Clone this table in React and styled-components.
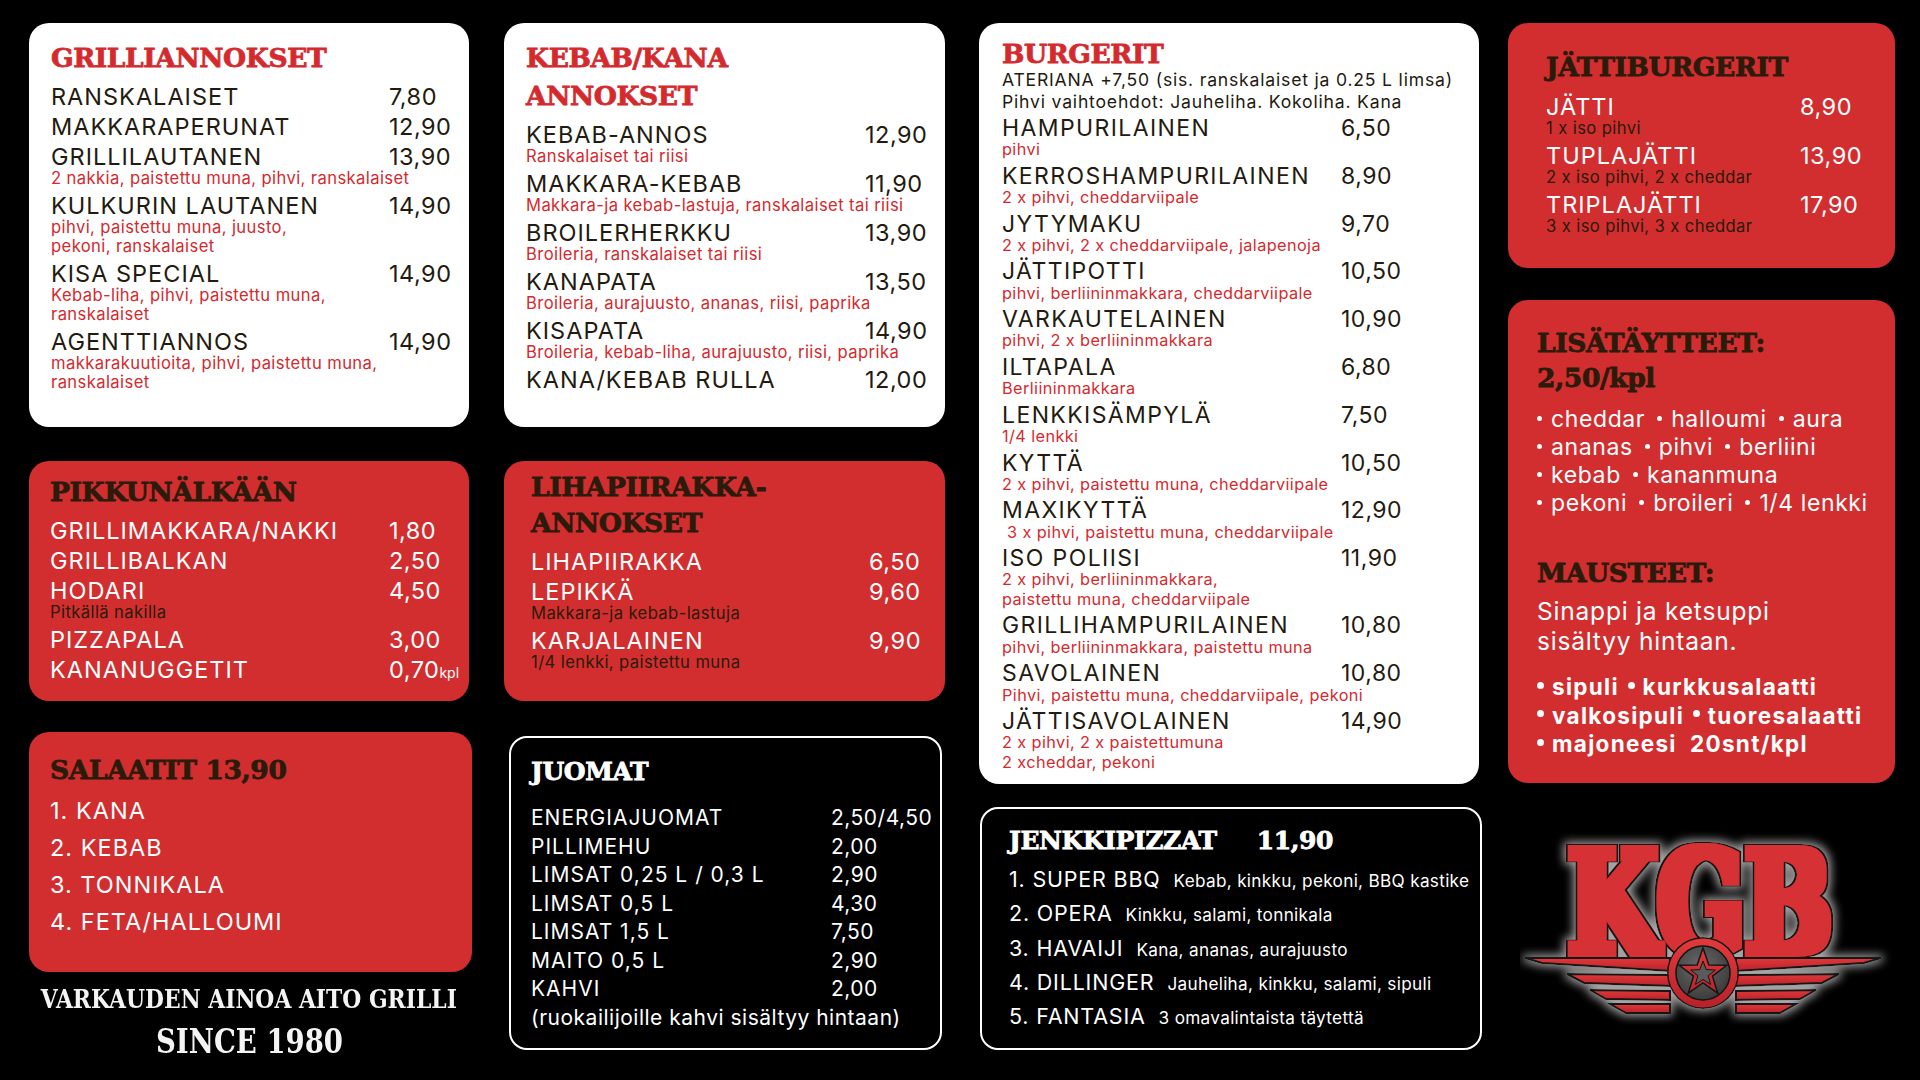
import React from 'react'
import styled, { createGlobalStyle } from 'styled-components'

const GlobalStyle = createGlobalStyle`
  html, body {
    margin: 0;
    padding: 0;
    background: #000;
  }
  body {
    width: 1920px;
    height: 1080px;
    overflow: hidden;
    font-family: Inter, "Noto Sans", sans-serif;
  }
`

const RED = '#d22e2f'
const DARK = '#2a1b0b'

const tones = {
  white: { bg: '#fff', title: '#d42a2e', item: '#231a10', desc: '#d42a2e', border: '0' },
  red: { bg: RED, title: DARK, item: '#fff', desc: DARK, border: '0' },
  black: { bg: '#000', title: '#fff', item: '#fff', desc: '#fff', border: '2px solid #fff' },
}

const Board = styled.main`
  display: flex;
  align-items: flex-start;
  width: 1920px;
  height: 1080px;
  box-sizing: border-box;
  padding: 23px 0 0 29px;
`

const Column = styled.div`
  display: flex;
  flex-direction: column;
  flex: none;
  width: ${p => p.$w}px;
  margin-left: ${p => p.$ml || 0}px;
`

const Card = styled.section`
  --title-color: ${p => tones[p.$tone].title};
  --desc-color: ${p => tones[p.$tone].desc};
  box-sizing: border-box;
  height: ${p => p.$h}px;
  margin: ${p => p.$mt || 0}px ${p => p.$mr || 0}px 0 ${p => p.$ml || 0}px;
  padding: ${p => p.$pad};
  border-radius: ${p => (p.$tone === 'black' ? 18 : 20)}px;
  border: ${p => tones[p.$tone].border};
  background: ${p => tones[p.$tone].bg};
  color: ${p => tones[p.$tone].item};
`

const Title = styled.h2`
  margin: ${p => p.$mt || 0}px 0 ${p => p.$mb || 0}px;
  font-family: "DejaVu Serif", "Liberation Serif", serif;
  font-weight: 700;
  font-size: ${p => p.$size || 26.5}px;
  line-height: ${p => p.$lh || 38}px;
  letter-spacing: -0.4px;
  color: var(--title-color);
  -webkit-text-stroke: 0.8px var(--title-color);
  white-space: nowrap;
`

const TitlePrice = styled.span`
  margin-left: 40px;
`

const Row = styled.div`
  display: grid;
  grid-template-columns: ${p => p.$priceAt}px auto;
  font-size: ${p => p.$size}px;
  line-height: ${p => p.$lh}px;
  letter-spacing: ${p => p.$track}px;
  white-space: nowrap;
`

const Price = styled.span`
  letter-spacing: 0.5px;
`

const Unit = styled.span`
  font-size: 14px;
  letter-spacing: 0;
`

const Desc = styled.div`
  margin: ${p => p.$mt}px 0 ${p => p.$mb}px;
  color: var(--desc-color);
  font-size: ${p => p.$size}px;
  line-height: ${p => p.$lh}px;
  letter-spacing: 0.4px;
  white-space: pre;
`

const Sub = styled.div`
  margin-bottom: 2px;
  font-size: 17.6px;
  line-height: 20px;
  letter-spacing: 0.8px;
  white-space: nowrap;
`

const Line = styled.div`
  margin-top: ${p => p.$mt || 0}px;
  font-size: ${p => p.$size}px;
  font-weight: ${p => p.$weight || 400};
  line-height: ${p => p.$lh}px;
  letter-spacing: ${p => p.$track ?? 0.5}px;
  white-space: nowrap;
`

const Dot = styled.span`
  display: inline-block;
  width: ${p => p.$d}px;
  height: ${p => p.$d}px;
  margin: 0 ${p => p.$gap}px 0 ${p => p.$lead}px;
  border-radius: 50%;
  background: currentColor;
  vertical-align: 0.28em;
`

const PizzaRow = styled.div`
  font-size: 21.5px;
  line-height: 34.3px;
  letter-spacing: 0.8px;
  white-space: nowrap;
`

const PizzaDesc = styled.span`
  margin-left: 13px;
  font-size: 17.2px;
  line-height: 1;
  letter-spacing: 0.3px;
`

const Slogan = styled.div`
  align-self: center;
  width: max-content;
  margin-top: ${p => p.$mt}px;
  font-family: "DejaVu Serif", serif;
  font-weight: 700;
  font-size: ${p => p.$size}px;
  line-height: ${p => p.$lh}px;
  color: #f4f4f4;
  white-space: nowrap;
  transform: scaleX(${p => p.$sx});
`

const LogoWrap = styled.div`
  margin: 17px 0 0 12px;
  width: 400px;
  height: 230px;
`

const grilli = [
  { name: 'RANSKALAISET', price: '7,80' },
  { name: 'MAKKARAPERUNAT', price: '12,90' },
  { name: 'GRILLILAUTANEN', price: '13,90', desc: ['2 nakkia, paistettu muna, pihvi, ranskalaiset'] },
  { name: 'KULKURIN LAUTANEN', price: '14,90', desc: ['pihvi, paistettu muna, juusto,', 'pekoni, ranskalaiset'] },
  { name: 'KISA SPECIAL', price: '14,90', desc: ['Kebab-liha, pihvi, paistettu muna,', 'ranskalaiset'] },
  { name: 'AGENTTIANNOS', price: '14,90', desc: ['makkarakuutioita, pihvi, paistettu muna,', 'ranskalaiset'] },
]

const kebab = [
  { name: 'KEBAB-ANNOS', price: '12,90', desc: ['Ranskalaiset tai riisi'] },
  { name: 'MAKKARA-KEBAB', price: '11,90', desc: ['Makkara-ja kebab-lastuja, ranskalaiset tai riisi'] },
  { name: 'BROILERHERKKU', price: '13,90', desc: ['Broileria, ranskalaiset tai riisi'] },
  { name: 'KANAPATA', price: '13,50', desc: ['Broileria, aurajuusto, ananas, riisi, paprika'] },
  { name: 'KISAPATA', price: '14,90', desc: ['Broileria, kebab-liha, aurajuusto, riisi, paprika'] },
  { name: 'KANA/KEBAB RULLA', price: '12,00' },
]

const burgers = [
  { name: 'HAMPURILAINEN', price: '6,50', desc: ['pihvi'] },
  { name: 'KERROSHAMPURILAINEN', price: '8,90', desc: ['2 x pihvi, cheddarviipale'] },
  { name: 'JYTYMAKU', price: '9,70', desc: ['2 x pihvi, 2 x cheddarviipale, jalapenoja'] },
  { name: 'JÄTTIPOTTI', price: '10,50', desc: ['pihvi, berliininmakkara, cheddarviipale'] },
  { name: 'VARKAUTELAINEN', price: '10,90', desc: ['pihvi, 2 x berliininmakkara'] },
  { name: 'ILTAPALA', price: '6,80', desc: ['Berliininmakkara'] },
  { name: 'LENKKISÄMPYLÄ', price: '7,50', desc: ['1/4 lenkki'] },
  { name: 'KYTTÄ', price: '10,50', desc: ['2 x pihvi, paistettu muna, cheddarviipale'] },
  { name: 'MAXIKYTTÄ', price: '12,90', desc: [' 3 x pihvi, paistettu muna, cheddarviipale'] },
  { name: 'ISO POLIISI', price: '11,90', desc: ['2 x pihvi, berliininmakkara,', 'paistettu muna, cheddarviipale'] },
  { name: 'GRILLIHAMPURILAINEN', price: '10,80', desc: ['pihvi, berliininmakkara, paistettu muna'] },
  { name: 'SAVOLAINEN', price: '10,80', desc: ['Pihvi, paistettu muna, cheddarviipale, pekoni'] },
  { name: 'JÄTTISAVOLAINEN', price: '14,90', desc: ['2 x pihvi, 2 x paistettumuna', '2 xcheddar, pekoni'] },
]

const jatti = [
  { name: 'JÄTTI', price: '8,90', desc: ['1 x iso pihvi'] },
  { name: 'TUPLAJÄTTI', price: '13,90', desc: ['2 x iso pihvi, 2 x cheddar'] },
  { name: 'TRIPLAJÄTTI', price: '17,90', desc: ['3 x iso pihvi, 3 x cheddar'] },
]

const pikku = [
  { name: 'GRILLIMAKKARA/NAKKI', price: '1,80' },
  { name: 'GRILLIBALKAN', price: '2,50' },
  { name: 'HODARI', price: '4,50', desc: ['Pitkällä nakilla'] },
  { name: 'PIZZAPALA', price: '3,00' },
  { name: 'KANANUGGETIT', price: '0,70', unit: 'kpl' },
]

const piirakka = [
  { name: 'LIHAPIIRAKKA', price: '6,50' },
  { name: 'LEPIKKÄ', price: '9,60', desc: ['Makkara-ja kebab-lastuja'] },
  { name: 'KARJALAINEN', price: '9,90', desc: ['1/4 lenkki, paistettu muna'] },
]

const juomat = [
  { name: 'ENERGIAJUOMAT', price: '2,50/4,50' },
  { name: 'PILLIMEHU', price: '2,00' },
  { name: 'LIMSAT 0,25 L / 0,3 L', price: '2,90' },
  { name: 'LIMSAT 0,5 L', price: '4,30' },
  { name: 'LIMSAT 1,5 L', price: '7,50' },
  { name: 'MAITO 0,5 L', price: '2,90' },
  { name: 'KAHVI', price: '2,00' },
]

const salaatit = ['1. KANA', '2. KEBAB', '3. TONNIKALA', '4. FETA/HALLOUMI']

const pizzat = [
  ['1. SUPER BBQ', 'Kebab, kinkku, pekoni, BBQ kastike'],
  ['2. OPERA', 'Kinkku, salami, tonnikala'],
  ['3. HAVAIJI', 'Kana, ananas, aurajuusto'],
  ['4. DILLINGER', 'Jauheliha, kinkku, salami, sipuli'],
  ['5. FANTASIA', '3 omavalintaista täytettä'],
]

function MenuList({ items, priceAt, size = 23.5, lh = 30, track = 1, dSize = 16.6, dLh = 19, dMt = -3, dMb = 3 }) {
  return items.map(item => (
    <React.Fragment key={item.name}>
      <Row $priceAt={priceAt} $size={size} $lh={lh} $track={track}>
        <span>{item.name}</span>
        <Price>
          {item.price}
          {item.unit && <Unit>{item.unit}</Unit>}
        </Price>
      </Row>
      {item.desc && (
        <Desc $size={dSize} $lh={dLh} $mt={dMt} $mb={dMb}>
          {item.desc.map(l => <div key={l}>{l}</div>)}
        </Desc>
      )}
    </React.Fragment>
  ))
}

function Bullets({ words, d = 5, gap = 9, lead = 5 }) {
  return words.map((w, i) => (
    <React.Fragment key={w}>
      {i > 0 && ' '}
      <Dot $d={d} $gap={gap} $lead={i > 0 ? lead : 0} />
      {w}
    </React.Fragment>
  ))
}

const starPoints = (cx, cy, R, r) =>
  Array.from({ length: 10 }, (_, i) => {
    const a = ((-90 + i * 36) * Math.PI) / 180
    const rad = i % 2 ? r : R
    return `${(cx + rad * Math.cos(a)).toFixed(1)},${(cy + rad * Math.sin(a)).toFixed(1)}`
  }).join(' ')

const wing = [
  '5,128 150,128 150,141 22,133',
  '47,144 150,145 150,156 64,153',
  '70,160 150,161 150,170 86,169',
  '90,174 150,174 150,183 106,183',
]

function Logo() {
  return (
    <svg viewBox="0 -30 400 230" width="400" height="230">
      <defs>
        <filter id="heavy" x="-8%" y="-15%" width="116%" height="130%">
          <feMorphology in="SourceGraphic" operator="dilate" radius="4.5 3.6" result="fat" />
          <feMorphology in="SourceAlpha" operator="dilate" radius="6.5 5.2" result="ring" />
          <feFlood floodColor="#151515" />
          <feComposite in2="ring" operator="in" result="outline" />
          <feMerge>
            <feMergeNode in="outline" />
            <feMergeNode in="fat" />
          </feMerge>
        </filter>
        <filter id="glow" x="-10%" y="-20%" width="120%" height="140%">
          <feMorphology in="SourceAlpha" operator="dilate" radius="2" result="grow" />
          <feGaussianBlur in="grow" stdDeviation="5" result="blur" />
          <feFlood floodColor="#cfcfcf" floodOpacity="0.8" />
          <feComposite in2="blur" operator="in" result="halo" />
          <feMerge>
            <feMergeNode in="halo" />
            <feMergeNode in="SourceGraphic" />
          </feMerge>
        </filter>
        <linearGradient id="redFill" x1="0" y1="0" x2="0" y2="1">
          <stop offset="0" stopColor="#e0393a" />
          <stop offset="1" stopColor="#bb232a" />
        </linearGradient>
        <radialGradient id="hub" cx="0.45" cy="0.4" r="0.7">
          <stop offset="0" stopColor="#6a6a6a" />
          <stop offset="1" stopColor="#2e2e2e" />
        </radialGradient>
      </defs>
      <g filter="url(#glow)">
        <text
          x="48"
          y="123"
          textLength="264"
          lengthAdjust="spacingAndGlyphs"
          fontFamily="DejaVu Serif, serif"
          fontWeight="700"
          fontSize="142"
          fill="#d63334"
          filter="url(#heavy)"
        >
          KGB
        </text>
        <g fill="url(#redFill)" stroke="#151515" strokeWidth="2">
          {wing.map(p => <polygon key={p} points={p} />)}
          <g transform="translate(366 0) scale(-1 1)">
            {wing.map(p => <polygon key={p} points={p} />)}
          </g>
        </g>
        <circle cx="183" cy="143" r="36" fill="#151515" />
        <circle cx="183" cy="143" r="31" fill="url(#hub)" stroke="url(#redFill)" strokeWidth="7" />
        <circle cx="183" cy="143" r="27" fill="none" stroke="#151515" strokeWidth="1.5" />
        <polygon points={starPoints(183, 143, 25, 10)} fill="url(#redFill)" stroke="#151515" strokeWidth="1.5" />
        <polygon points={starPoints(183, 144, 13, 5.5)} fill="#5a5a5a" stroke="#151515" strokeWidth="1" />
      </g>
    </svg>
  )
}

export default function App() {
  return (
    <>
      <GlobalStyle />
      <Board>
        <Column $w={440}>
          <Card $tone="white" $h={404} $pad="16px 22px">
            <Title $mb={5}>GRILLIANNOKSET</Title>
            <MenuList items={grilli} priceAt={338} />
          </Card>

          <Card $tone="red" $h={240} $pad="12px 21px" $mt={34}>
            <Title $mb={5}>PIKKUNÄLKÄÄN</Title>
            <MenuList items={pikku} priceAt={339} />
          </Card>

          <Card $tone="red" $h={240} $pad="19px 21px" $mt={31} $mr={-3}>
            <Title $mb={3}>SALAATIT 13,90</Title>
            {salaatit.map(s => (
              <Line key={s} $size={23.5} $lh={37} $track={1}>{s}</Line>
            ))}
          </Card>

          <Slogan $mt={11} $size={26} $lh={32} $sx={0.84}>VARKAUDEN AINOA AITO GRILLI</Slogan>
          <Slogan $mt={6} $size={34} $lh={40} $sx={0.81}>SINCE 1980</Slogan>
        </Column>

        <Column $w={441} $ml={35}>
          <Card $tone="white" $h={404} $pad="16px 22px">
            <Title $mb={5}>KEBAB/KANA<br />ANNOKSET</Title>
            <MenuList items={kebab} priceAt={339} />
          </Card>

          <Card $tone="red" $h={240} $pad="8px 27px" $mt={34}>
            <Title $lh={36} $mb={6}>LIHAPIIRAKKA-<br />ANNOKSET</Title>
            <MenuList items={piirakka} priceAt={338} />
          </Card>

          <Card $tone="black" $h={314} $pad="17px 20px" $mt={35} $ml={5} $mr={3}>
            <Title $size={25} $lh={34} $mb={15}>JUOMAT</Title>
            <MenuList items={juomat} priceAt={300} size={21} lh={28.5} />
            <Line $size={21} $lh={28.5}>(ruokailijoille kahvi sisältyy hintaan)</Line>
          </Card>
        </Column>

        <Column $w={500} $ml={34}>
          <Card $tone="white" $h={761} $pad="12px 23px">
            <Title $mb={-3}>BURGERIT</Title>
            <Sub>ATERIANA +7,50 (sis. ranskalaiset ja 0.25 L limsa)</Sub>
            <Sub>Pihvi vaihtoehdot: Jauheliha. Kokoliha. Kana</Sub>
            <MenuList
              items={burgers}
              priceAt={339}
              size={23}
              lh={28.8}
              track={1.4}
              dSize={16.3}
              dLh={19.5}
              dMt={-2.5}
              dMb={2}
            />
          </Card>

          <Card $tone="black" $h={243} $pad="15px 27px" $mt={23} $ml={1} $mr={-3}>
            <Title $size={25} $lh={34} $mb={4}>
              JENKKIPIZZAT<TitlePrice>11,90</TitlePrice>
            </Title>
            {pizzat.map(([name, desc]) => (
              <PizzaRow key={name}>
                {name}
                <PizzaDesc>{desc}</PizzaDesc>
              </PizzaRow>
            ))}
          </Card>
        </Column>

        <Column $w={387} $ml={29}>
          <Card $tone="red" $h={245} $pad="25px 38px">
            <Title $mb={6}>JÄTTIBURGERIT</Title>
            <MenuList items={jatti} priceAt={254} />
          </Card>

          <Card $tone="red" $h={483} $pad="25px 29px" $mt={32}>
            <Title $lh={35} $mb={10}>LISÄTÄYTTEET:<br />2,50/kpl</Title>
            <Line $size={23} $lh={28} $track={0.6}><Bullets words={['cheddar', 'halloumi', 'aura']} /></Line>
            <Line $size={23} $lh={28} $track={0.6}><Bullets words={['ananas', 'pihvi', 'berliini']} /></Line>
            <Line $size={23} $lh={28} $track={0.6}><Bullets words={['kebab', 'kananmuna']} /></Line>
            <Line $size={23} $lh={28} $track={0.6}><Bullets words={['pekoni', 'broileri', '1/4 lenkki']} /></Line>
            <Title $lh={35} $mt={38} $mb={6}>MAUSTEET:</Title>
            <Line $size={24.5} $lh={30} $track={0.8}>Sinappi ja ketsuppi</Line>
            <Line $size={24.5} $lh={30} $track={0.8}>sisältyy hintaan.</Line>
            <Line $mt={17} $size={22.5} $lh={28.5} $weight={700} $track={1.3}>
              <Bullets words={['sipuli', 'kurkkusalaatti']} d={7} gap={8} lead={2} />
            </Line>
            <Line $size={22.5} $lh={28.5} $weight={700} $track={1.3}>
              <Bullets words={['valkosipuli', 'tuoresalaatti']} d={7} gap={8} lead={2} />
            </Line>
            <Line $size={22.5} $lh={28.5} $weight={700} $track={1.3}>
              <Dot $d={7} $gap={8} $lead={0} />majoneesi{'\u00a0\u00a0'}20snt/kpl
            </Line>
          </Card>

          <LogoWrap>
            <Logo />
          </LogoWrap>
        </Column>
      </Board>
    </>
  )
}
